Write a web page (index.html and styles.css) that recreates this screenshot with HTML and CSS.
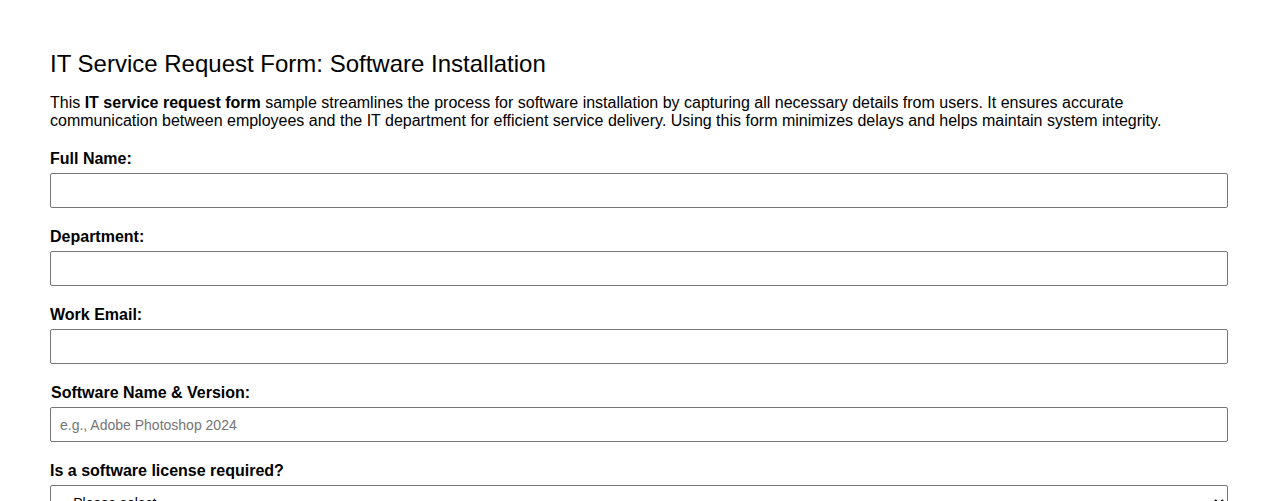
FILE: index.html
```html
<!DOCTYPE html>
<html lang="en">

<head>
    <meta charset="UTF-8">
    <meta name="viewport" content="width=device-width, initial-scale=1.0">
    <title>IT Service Request Form</title>

    <link rel="stylesheet" href="styles.css">
</head>

<body>

    <div class="form-wrap">
        <h1 class="title">IT Service Request Form: Software Installation</h1>
        <p class="intro">This <strong>IT service request form</strong> sample streamlines the process for software installation by capturing all necessary details from users. It ensures accurate communication between employees and the IT department for efficient service delivery. Using this form minimizes delays and helps maintain system integrity.</p>

        <form class="request-form">
            <div class="field">
                <label for="fullName">Full Name:</label>
                <input type="text" id="fullName">
            </div>
            <div class="field">
                <label for="department">Department:</label>
                <input type="text" id="department">
            </div>
            <div class="field">
                <label for="email">Work Email:</label>
                <input type="email" id="email">
            </div>
            <div class="field">
                <label for="software" class="indent">Software Name &amp; Version:</label>
                <input type="text" id="software" placeholder="e.g., Adobe Photoshop 2024">
            </div>
            <div class="field">
                <label for="license">Is a software license required?</label>
                <select id="license">
                    <option>-- Please select --</option>
                    <option>Yes</option>
                    <option>No</option>
                </select>
            </div>
        </form>
    </div>

</body>

</html>
```

FILE: styles.css
```css
body {
    margin: 0;
    font-family: "Liberation Sans", Arial, sans-serif;
    color: #000;
    background: #fff;
}

.form-wrap {
    padding: 50px 50px 20px;
}

.title {
    font-size: 24px;
    font-weight: normal;
    margin: 0 0 16px;
}

.intro {
    font-size: 16px;
    line-height: 18px;
    margin: 0 0 20px;
}

.field {
    margin-bottom: 20px;
}

.field label {
    display: block;
    font-weight: bold;
    font-size: 16px;
    line-height: 18px;
    margin-bottom: 5px;
}

.field label.indent {
    padding-left: 1px;
}

.field input,
.field select {
    display: block;
    width: 100%;
    box-sizing: border-box;
    height: 35px;
    padding: 8px 9px;
    font-family: "Liberation Sans", Arial, sans-serif;
    font-size: 14px;
    border: 1px solid #767676;
    border-radius: 2px;
    background: #fff;
}

.field select {
    padding-left: 5px;
}

.field input::placeholder {
    color: #757575;
}
```
